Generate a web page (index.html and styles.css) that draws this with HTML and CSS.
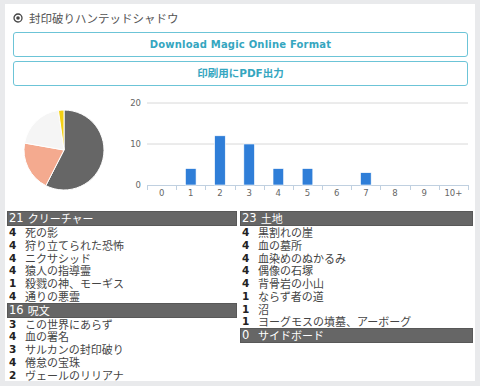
FILE: index.html
```html
<!DOCTYPE html>
<html lang="ja">
<head>
    <meta charset="UTF-8">
    <title>封印破りハンテッドシャドウ</title>
    <link rel="stylesheet" href="styles.css">
</head>
<body>
    <div class="deck-panel">
        <div class="deck-title">
            <svg class="title-icon" width="10" height="10" viewBox="0 0 10 10">
                <circle cx="5" cy="5" r="4" fill="none" stroke="#444" stroke-width="1.3"/>
                <circle cx="5" cy="5" r="1.8" fill="#444"/>
            </svg>
            <span>封印破りハンテッドシャドウ</span>
        </div>

        <a class="btn btn-latin" href="#">Download Magic Online Format</a>
        <a class="btn" href="#">印刷用にPDF出力</a>

        <div class="charts">
            <!-- color pie -->
            <svg class="pie" width="115" height="119" viewBox="0 0 115 119">
                <g stroke="#fff" stroke-width="1" stroke-linejoin="round">
                    <path d="M59,62 L59,22 A40,40 0 1,1 40.84,97.64 Z" fill="#666666"/>
                    <path d="M59,62 L40.84,97.64 A40,40 0 0,1 19.61,55.05 Z" fill="#f4aa8f"/>
                    <path d="M59,62 L19.61,55.05 A40,40 0 0,1 53.43,22.39 Z" fill="#f5f5f5"/>
                    <path d="M59,62 L53.43,22.39 A40,40 0 0,1 59,22 Z" fill="#f3cf12"/>
                </g>
            </svg>

            <!-- mana curve -->
            <svg class="curve" id="curve" width="355" height="119" viewBox="0 0 355 119"></svg>
        </div>

        <div class="lists">
            <div class="list-col">
                <div class="group-head"><span class="head-num">21</span>クリーチャー</div>
                <div class="card"><span class="qty">4</span><span class="name">死の影</span></div>
                <div class="card"><span class="qty">4</span><span class="name">狩り立てられた恐怖</span></div>
                <div class="card"><span class="qty">4</span><span class="name">ニクサシッド</span></div>
                <div class="card"><span class="qty">4</span><span class="name">猿人の指導霊</span></div>
                <div class="card"><span class="qty">1</span><span class="name">殺戮の神、モーギス</span></div>
                <div class="card"><span class="qty">4</span><span class="name">通りの悪霊</span></div>
                <div class="group-head"><span class="head-num">16</span>呪文</div>
                <div class="card"><span class="qty">3</span><span class="name">この世界にあらず</span></div>
                <div class="card"><span class="qty">4</span><span class="name">血の署名</span></div>
                <div class="card"><span class="qty">3</span><span class="name">サルカンの封印破り</span></div>
                <div class="card"><span class="qty">4</span><span class="name">倦怠の宝珠</span></div>
                <div class="card"><span class="qty">2</span><span class="name">ヴェールのリリアナ</span></div>
            </div>
            <div class="list-col">
                <div class="group-head"><span class="head-num">23</span>土地</div>
                <div class="card"><span class="qty">4</span><span class="name">黒割れの崖</span></div>
                <div class="card"><span class="qty">4</span><span class="name">血の墓所</span></div>
                <div class="card"><span class="qty">4</span><span class="name">血染めのぬかるみ</span></div>
                <div class="card"><span class="qty">4</span><span class="name">偶像の石塚</span></div>
                <div class="card"><span class="qty">4</span><span class="name">背骨岩の小山</span></div>
                <div class="card"><span class="qty">1</span><span class="name">ならず者の道</span></div>
                <div class="card"><span class="qty">1</span><span class="name">沼</span></div>
                <div class="card"><span class="qty">1</span><span class="name">ヨーグモスの墳墓、アーボーグ</span></div>
                <div class="group-head"><span class="head-num wide">0</span>サイドボード</div>
            </div>
        </div>
    </div>

    <script>
        // Build the mana curve chart
        const svg = document.getElementById('curve');
        const NS = 'http://www.w3.org/2000/svg';
        const counts = [0, 4, 12, 10, 4, 4, 0, 3, 0, 0, 0];
        const labels = ['0', '1', '2', '3', '4', '5', '6', '7', '8', '9', '10+'];
        const left = 27, right = 348, base = 97, perUnit = 4.1;
        const step = (right - left) / counts.length;

        function add(tag, attrs, text) {
            const el = document.createElementNS(NS, tag);
            for (const k in attrs) el.setAttribute(k, attrs[k]);
            if (text) el.textContent = text;
            svg.appendChild(el);
            return el;
        }

        // grid lines + y labels
        [20, 10, 0].forEach(v => {
            const y = base - v * perUnit;
            if (v > 0) add('line', { x1: left, x2: right, y1: y, y2: y, stroke: '#d8d8d8', 'stroke-width': 1 });
            add('text', { x: 21, y: y + 3, 'text-anchor': 'end', class: 'axis-label' }, String(v));
        });

        // x axis and ticks
        add('line', { x1: left, x2: right, y1: base + 0.5, y2: base + 0.5, stroke: '#c0d0e0', 'stroke-width': 1 });
        for (let i = 0; i <= counts.length; i++) {
            const x = Math.round(left + step * i) + 0.5;
            add('line', { x1: x, x2: x, y1: base, y2: base + 5, stroke: '#c0d0e0', 'stroke-width': 1 });
        }

        // bars + x labels
        counts.forEach((c, i) => {
            const cx = left + step * (i + 0.5);
            if (c > 0) {
                const h = c * perUnit;
                add('rect', { x: cx - 5.3, y: base - h, width: 10.6, height: h, fill: '#2f7ed8', stroke: '#fff', 'stroke-width': 0.6 });
            }
            add('text', { x: cx, y: 108, 'text-anchor': 'middle', class: 'axis-label' }, labels[i]);
        });
    </script>
</body>
</html>
```

FILE: styles.css
```css
body {
    margin: 0;
    background-color: #e9eaec;
    font-family: "Noto Sans CJK JP", "DejaVu Sans", sans-serif;
}

.deck-panel {
    margin: 4px 0 0 5px;
    width: 470px;
    height: 377px;
    background: #fff;
    padding-top: 4px;
    box-sizing: border-box;
}

.deck-title {
    display: flex;
    align-items: center;
    gap: 6px;
    height: 20px;
    padding-left: 8px;
    margin-bottom: 4px;
    font-size: 11.5px;
    color: #555;
}

.title-icon {
    display: block;
}

.btn {
    display: block;
    margin: 0 7px 4px 8px;
    height: 25px;
    line-height: 23px;
    box-sizing: border-box;
    border: 1px solid #6cc4d7;
    border-radius: 3px;
    text-align: center;
    text-decoration: none;
    color: #35a6bf;
    font-family: "DejaVu Sans", "Noto Sans CJK JP", sans-serif;
    font-weight: bold;
    font-size: 10.5px;
}

.btn-latin {
    font-size: 10px;
    letter-spacing: 0.2px;
}

.charts {
    display: flex;
    height: 119px;
    margin-top: -2px;
}

.pie,
.curve {
    display: block;
}

.axis-label {
    font-family: "DejaVu Sans", sans-serif;
    font-size: 8.5px;
    fill: #666;
}

.lists {
    display: grid;
    grid-template-columns: 230px 233px;
    column-gap: 3px;
    margin: 4px 0 0 2px;
    align-items: start;
}

.group-head {
    display: flex;
    height: 15px;
    box-sizing: border-box;
    background: #666;
    border: 1px solid #585858;
    padding-left: 1px;
    color: #fff;
    font-size: 11px;
    line-height: 13px;
}

.head-num {
    font-family: "DejaVu Sans", sans-serif;
    font-size: 11.5px;
    margin-right: 4px;
}

.head-num.wide {
    width: 16px;
    margin-right: 0;
}

.card {
    display: flex;
    height: 12.75px;
    line-height: 12.75px;
    font-size: 11px;
    padding-left: 2px;
}

.qty {
    width: 16px;
    flex-shrink: 0;
    font-weight: bold;
    color: #222;
    font-family: "DejaVu Sans", sans-serif;
    font-size: 10.5px;
}

.name {
    color: #444;
}
```
